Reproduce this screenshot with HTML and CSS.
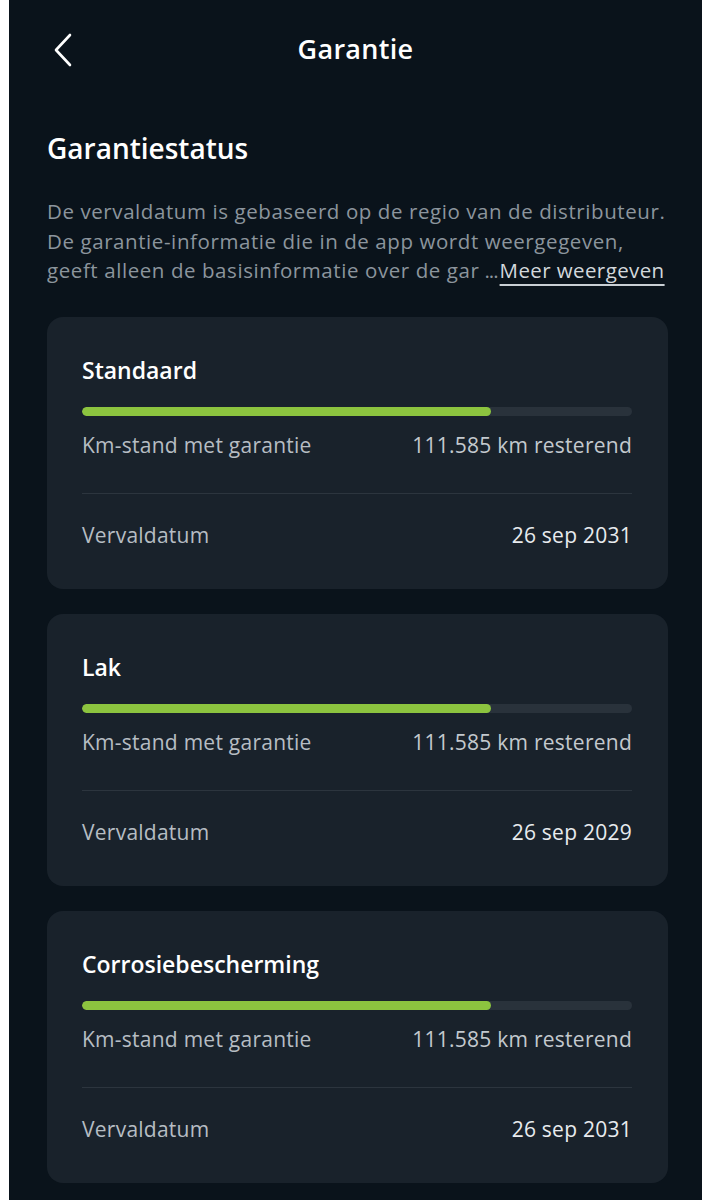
FILE: index.html
```html
<!DOCTYPE html>
<html lang="nl">
<head>
<meta charset="utf-8">
<title>Garantie</title>
<link rel="stylesheet" href="styles.css">
</head>
<body>
<div class="screen">
  <header class="topbar">
    <button class="back" aria-label="Terug">
      <svg width="22" height="34" viewBox="0 0 22 34"><path d="M18 2 L4 17 L18 32" fill="none" stroke="#ffffff" stroke-width="2.6" stroke-linecap="round" stroke-linejoin="round"/></svg>
    </button>
    <h1 class="title">Garantie</h1>
  </header>

  <main class="content">
    <h2 class="section-title">Garantiestatus</h2>
    <p class="intro">
      <span class="line">De vervaldatum is gebaseerd op de regio van de distributeur.</span>
      <span class="line">De garantie-informatie die in de app wordt weergegeven,</span>
      <span class="line last"><span class="clip">geeft alleen de basisinformatie over de gar</span><span class="dots">...</span><a class="more" href="#">Meer weergeven</a></span>
    </p>

    <div class="cards">
      <section class="card">
        <h3 class="card-title">Standaard</h3>
        <div class="bar"><div class="fill" style="width:74.4%"></div></div>
        <div class="row"><span class="label">Km-stand met garantie</span><span class="value light">111.585 km resterend</span></div>
        <div class="divider"></div>
        <div class="row"><span class="label">Vervaldatum</span><span class="value">26 sep 2031</span></div>
      </section>

      <section class="card">
        <h3 class="card-title">Lak</h3>
        <div class="bar"><div class="fill" style="width:74.4%"></div></div>
        <div class="row"><span class="label">Km-stand met garantie</span><span class="value light">111.585 km resterend</span></div>
        <div class="divider"></div>
        <div class="row"><span class="label">Vervaldatum</span><span class="value">26 sep 2029</span></div>
      </section>

      <section class="card">
        <h3 class="card-title">Corrosiebescherming</h3>
        <div class="bar"><div class="fill" style="width:74.4%"></div></div>
        <div class="row"><span class="label">Km-stand met garantie</span><span class="value light">111.585 km resterend</span></div>
        <div class="divider"></div>
        <div class="row"><span class="label">Vervaldatum</span><span class="value">26 sep 2031</span></div>
      </section>
    </div>
  </main>
</div>
</body>
</html>
```

FILE: styles.css
```css
* { box-sizing: border-box; }

html, body {
  margin: 0;
  padding: 0;
  background: #ffffff;
}

body {
  padding: 0 9px;
  font-family: "Open Sans", "Noto Sans", sans-serif;
}

.screen {
  background: #0a131b;
  min-height: 1200px;
  overflow: hidden;
}

.topbar {
  position: relative;
  height: 100px;
  display: flex;
  align-items: flex-start;
  justify-content: center;
  padding-top: 30px;
}

.back {
  position: absolute;
  left: 43px;
  top: 33px;
  background: none;
  border: 0;
  padding: 0;
  cursor: pointer;
  display: flex;
}

.title {
  margin: 0;
  color: #ffffff;
  font-size: 27px;
  font-weight: 600;
  line-height: 38px;
  letter-spacing: 0.3px;
}

.content {
  padding: 0 34px 0 38px;
}

.section-title {
  margin: 28px 0 0;
  color: #ffffff;
  font-size: 28px;
  font-weight: 600;
  line-height: 40px;
}

.intro {
  margin: 29px 0 0;
  color: #8c959d;
  font-size: 20.5px;
  line-height: 29.5px;
  letter-spacing: 0.58px;
}

.line {
  display: block;
  white-space: nowrap;
}

.line.last {
  display: flex;
  align-items: baseline;
}

.clip { overflow: hidden; }

.dots { margin-left: 5px; letter-spacing: -1px; }

.more {
  margin-left: 2px;
  color: #d3d8dc;
  letter-spacing: 0.4px;
  text-decoration: underline;
  text-underline-offset: 6px;
  text-decoration-thickness: 2px;
  text-decoration-color: #c9cfd4;
}

.cards {
  margin-top: 31px;
  display: flex;
  flex-direction: column;
  gap: 25px;
}

.card {
  background: #19222b;
  border-radius: 16px;
  padding: 38px 36px 40px 35px;
}

.card-title {
  margin: 0;
  color: #ffffff;
  font-size: 23px;
  font-weight: 600;
  line-height: 30px;
}

.bar {
  margin-top: 22px;
  height: 9px;
  border-radius: 5px;
  background: #29323b;
  overflow: hidden;
}

.fill {
  height: 100%;
  border-radius: 5px;
  background: #8cc43f;
}

.row {
  display: flex;
  justify-content: space-between;
  align-items: center;
  font-size: 21px;
  line-height: 28px;
  letter-spacing: 0.25px;
}

.bar + .row { margin-top: 15px; }

.label { color: #b6bdc3; }

.value { color: #e8ebee; }

.value.light { color: #c3c9ce; }

.divider {
  height: 1px;
  background: #2c353e;
  margin: 34px 0 27px;
}
```
